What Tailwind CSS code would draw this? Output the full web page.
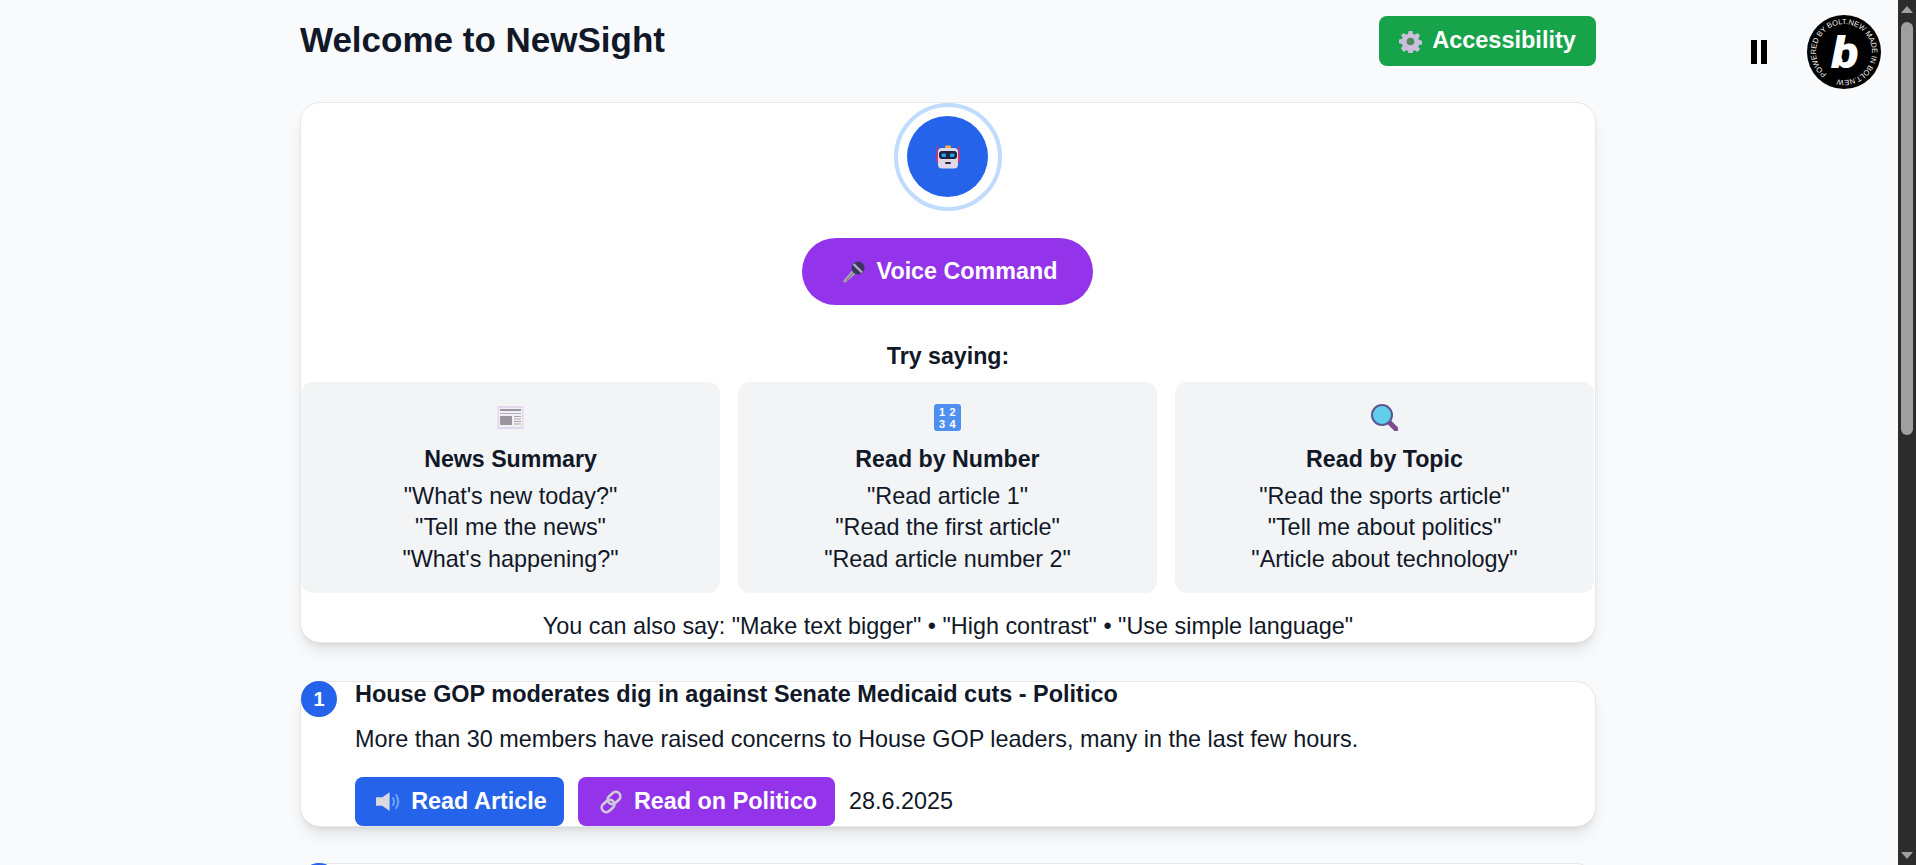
<!DOCTYPE html>
<html lang="en">

<head>
  <meta charset="UTF-8" />
  <meta name="viewport" content="width=device-width, initial-scale=1.0" />
  <title>NewSight</title>
  <script src="https://cdn.jsdelivr.net/npm/@tailwindcss/browser@4"></script>
</head>

<body class="h-screen overflow-hidden bg-[#f9fafb] text-[#111827] font-['Liberation_Sans',Arial,sans-serif]">
  <div class="flex h-full">
    <main class="relative flex-1 overflow-hidden">
      <div class="w-[1296px] ml-[300px] pt-4">

        <!-- Header -->
        <header class="flex justify-between items-center mb-9 h-[50px]">
          <h1 class="text-[35px] leading-[50px] font-bold -mt-[3px]">Welcome to NewSight</h1>
          <button class="flex items-center justify-center gap-[10px] w-[217px] h-[50px] rounded-lg bg-[#16a34a] text-white text-[23.5px] font-bold">
            <svg class="w-[23px] h-[23px]" viewBox="0 0 24 24"><circle cx="12" cy="12" r="5" fill="#4e8a5e"/><path fill="#cbbfdc" fill-rule="evenodd" d="M10 1h4l.6 3.200 1.900.8L19.200 3 22 5.800l-1.900 2.700.8 1.900 3.100.6v4l-3.100.6-.8 1.900 1.900 2.700-2.800 2.800-2.700-1.900-1.900.8-.6 3.100h-4l-.6-3.100-1.900-.8-2.700 1.900L2 19.100l1.900-2.700-.8-1.900L0 13.900v-4l3.100-.6.8-1.900L2 5.800 4.800 3l2.700 2 1.900-.8z M12 8a4 4 0 1 0 0 8 4 4 0 0 0 0-8z"/></svg>
            <span>Accessibility</span>
          </button>
        </header>

        <!-- Assistant card -->
        <section class="bg-white border border-gray-200 rounded-[20px] shadow-lg h-[541px] flex flex-col items-center mb-[38px]">
          <div class="w-[108px] h-[108px] shrink-0 rounded-full border-4 border-[#bfdbfe] flex items-center justify-center">
            <div class="w-[81px] h-[81px] mb-[1px] mr-[1px] rounded-full bg-[#2563eb] flex items-center justify-center">
              <svg class="w-[24px] h-[24px]" viewBox="0 0 24 24">
                <rect x="9" y="0.500" width="6" height="2.500" rx="1" fill="#f5b335"/>
                <path d="M1 1v16M23 1v16" stroke="#e0305f" stroke-width="1.200"/>
                <rect x="0.500" y="8" width="23" height="9" rx="2" fill="#d8336a"/>
                <rect x="2" y="3" width="20" height="20.500" rx="4" fill="#e2d9e8"/>
                <rect x="3" y="6" width="18" height="8" rx="3" fill="#1e2340"/>
                <rect x="5.500" y="8.500" width="4.500" height="3.500" rx="1" fill="#1fa5e8"/>
                <rect x="14" y="8.500" width="4.500" height="3.500" rx="1" fill="#1fa5e8"/>
                <rect x="9" y="17" width="6" height="2" rx="1" fill="#2a2740"/>
              </svg>
            </div>
          </div>

          <button class="mt-[27px] mr-[2px] w-[291px] h-[67px] pl-[5px] shrink-0 rounded-full bg-[#9333ea] text-white text-[23.3px] font-bold flex items-center justify-center gap-[11px]">
            <svg class="w-[24px] h-[24px]" viewBox="0 0 24 24">
              <path d="M3 23l-2-2L13 7l4 4z" fill="#aaa4b0"/>
              <path d="M4 21L15 9" stroke="#6f6a78" stroke-width="1"/>
              <circle cx="16" cy="8" r="6.500" fill="#3b3360"/>
              <path d="M11.500 4l8.500 8.500" stroke="#b5aebb" stroke-width="2.400"/>
            </svg>
            <span>Voice Command</span>
          </button>

          <h2 class="mt-[36px] text-[23.2px] leading-[31px] font-bold">Try saying:</h2>

          <div class="mt-[10px] w-full grid grid-cols-3 gap-[18px] pr-[1px]">
            <div class="h-[211px] rounded-xl bg-[#f3f4f6] flex flex-col items-center pt-[22px] text-[23.4px] leading-[31.5px]">
              <svg class="w-[27px] h-[27px] mb-[13px]" viewBox="0 0 27 27">
                <rect x="0.500" y="2" width="26" height="23" fill="#e2d7ec"/>
                <rect x="2" y="4" width="23" height="19" fill="#f3f0f5"/>
                <rect x="3" y="5" width="21" height="2" fill="#9b96a3"/>
                <rect x="3" y="9" width="21" height="1" fill="#b5b0bb"/>
                <rect x="3" y="12" width="12" height="9" rx="1" fill="#99959e"/>
                <path d="M17 12.500h7M17 15h7M17 17.500h7M17 20h7" stroke="#a8a3ad"/>
              </svg>
              <h3 class="font-bold text-[23.2px]">News Summary</h3>
              <p class="mt-[5px]">"What's new today?"</p>
              <p>"Tell me the news"</p>
              <p>"What's happening?"</p>
            </div>
            <div class="h-[211px] rounded-xl bg-[#f3f4f6] flex flex-col items-center pt-[22px] text-[23.4px] leading-[31.5px]">
              <svg class="w-[27px] h-[27px] mb-[13px]" viewBox="0 0 27 27">
                <rect x="0" y="0" width="27" height="27" rx="3" fill="#4f8ff0"/>
                <text x="8" y="12" text-anchor="middle" font-family="Liberation Sans" font-weight="700" font-size="11" fill="#fff">1</text>
                <text x="18.500" y="12" text-anchor="middle" font-family="Liberation Sans" font-weight="700" font-size="11" fill="#fff">2</text>
                <text x="8" y="23.500" text-anchor="middle" font-family="Liberation Sans" font-weight="700" font-size="11" fill="#fff">3</text>
                <text x="18.500" y="23.500" text-anchor="middle" font-family="Liberation Sans" font-weight="700" font-size="11" fill="#fff">4</text>
              </svg>
              <h3 class="font-bold text-[23.2px]">Read by Number</h3>
              <p class="mt-[5px]">"Read article 1"</p>
              <p>"Read the first article"</p>
              <p>"Read article number 2"</p>
            </div>
            <div class="h-[211px] rounded-xl bg-[#f3f4f6] flex flex-col items-center pt-[22px] text-[23.4px] leading-[31.5px]">
              <svg class="w-[27px] h-[27px] mb-[13px]" viewBox="0 0 27 27">
                <path d="M17 17l8 8" stroke="#7d4a8f" stroke-width="5" stroke-linecap="round"/>
                <circle cx="11" cy="11" r="10" fill="#5fcfec" stroke="#5f5690" stroke-width="2"/>
              </svg>
              <h3 class="font-bold text-[23.2px]">Read by Topic</h3>
              <p class="mt-[5px]">"Read the sports article"</p>
              <p>"Tell me about politics"</p>
              <p>"Article about technology"</p>
            </div>
          </div>

          <p class="mt-[18px] text-[23.4px] leading-[31px]">You can also say: "Make text bigger" • "High contrast" • "Use simple language"</p>
        </section>

        <!-- Articles -->
        <article class="relative bg-white border border-gray-200 rounded-[20px] shadow-lg h-[146px] pl-[54px] mb-[36px]">
          <span class="absolute left-0 -top-[1px] w-9 h-9 rounded-full bg-[#2563eb] text-white text-[20px] font-bold flex items-center justify-center">1</span>
          <h3 class="text-[23.45px] leading-[24px] font-bold">House GOP moderates dig in against Senate Medicaid cuts - Politico</h3>
          <p class="mt-[18px] text-[23.4px] leading-[31px]">More than 30 members have raised concerns to House GOP leaders, many in the last few hours.</p>
          <div class="mt-[22px] flex items-center gap-[14px] text-[23.4px]">
            <button class="w-[209px] h-[49px] pl-[3px] rounded-lg bg-[#2563eb] text-white font-bold flex items-center justify-center gap-[11px]">
              <svg class="w-[25px] h-[25px]" viewBox="0 0 24 24">
                <path d="M1 8h6l7-5v18l-7-5H1z" fill="#dcd8e0"/>
                <path d="M17 8c1.600 2.600 1.600 5.400 0 8M20 5c3 4.500 3 9.500 0 14" fill="none" stroke="#6ba5f7" stroke-width="2"/>
              </svg>
              <span>Read Article</span>
            </button>
            <button class="w-[257px] h-[49px] pl-[3px] rounded-lg bg-[#9333ea] text-white font-bold flex items-center justify-center gap-[11px]">
              <svg class="w-[24px] h-[24px]" viewBox="0 0 24 24" fill="none" stroke="#d0ccd6" stroke-width="2.600">
                <rect x="10.500" y="1" width="9" height="14" rx="4.500" transform="rotate(48 15 8)"/>
                <rect x="4.500" y="9" width="9" height="14" rx="4.500" transform="rotate(48 9 16)"/>
              </svg>
              <span>Read on Politico</span>
            </button>
            <span>28.6.2025</span>
          </div>
        </article>

        <article class="relative bg-white border border-gray-200 rounded-[20px] h-[146px]">
          <span class="absolute left-0 -top-[1px] w-9 h-9 rounded-full bg-[#2563eb]"></span>
        </article>
      </div>

      <!-- Floating controls -->
      <div class="absolute left-[1751px] top-[40px] flex gap-[4px]">
        <span class="w-[6px] h-[24px] bg-black"></span>
        <span class="w-[6px] h-[24px] bg-black"></span>
      </div>
      <svg class="absolute left-[1807px] top-[15px] w-[74px] h-[74px]" viewBox="0 0 74 74">
        <circle cx="37" cy="37" r="37" fill="#000"/>
        <defs><path id="ring" d="M37 37m-28 0a28 28 0 1 1 56 0a28 28 0 1 1-56 0"/></defs>
        <g transform="rotate(-52 37 37)">
          <text font-family="Liberation Sans" font-size="7.500" fill="#f2f2f2"><textPath href="#ring">POWERED BY BOLT.NEW MADE IN BOLT.NEW</textPath></text>
        </g>
        <path d="M25 53l5-20 6 13z" fill="#fff"/>
        <text x="38" y="53" text-anchor="middle" font-family="Roboto" font-weight="900" font-style="italic" font-size="44" fill="#fff" transform="translate(-5.700 0) scale(1.150 1)">b</text>
      </svg>
    </main>

    <!-- Scrollbar -->
    <aside class="relative w-[18px] shrink-0 bg-[#2c2c2c]">
      <div class="mx-auto mt-[6px] w-0 h-0 border-x-[6px] border-x-transparent border-b-[7px] border-b-[#9f9f9f]"></div>
      <div class="mx-auto mt-[9px] w-[12px] h-[413px] rounded-full bg-[#9f9f9f]"></div>
      <div class="absolute bottom-[6px] left-[3px] w-0 h-0 border-x-[6px] border-x-transparent border-t-[7px] border-t-[#9f9f9f]"></div>
    </aside>
  </div>
</body>

</html>
